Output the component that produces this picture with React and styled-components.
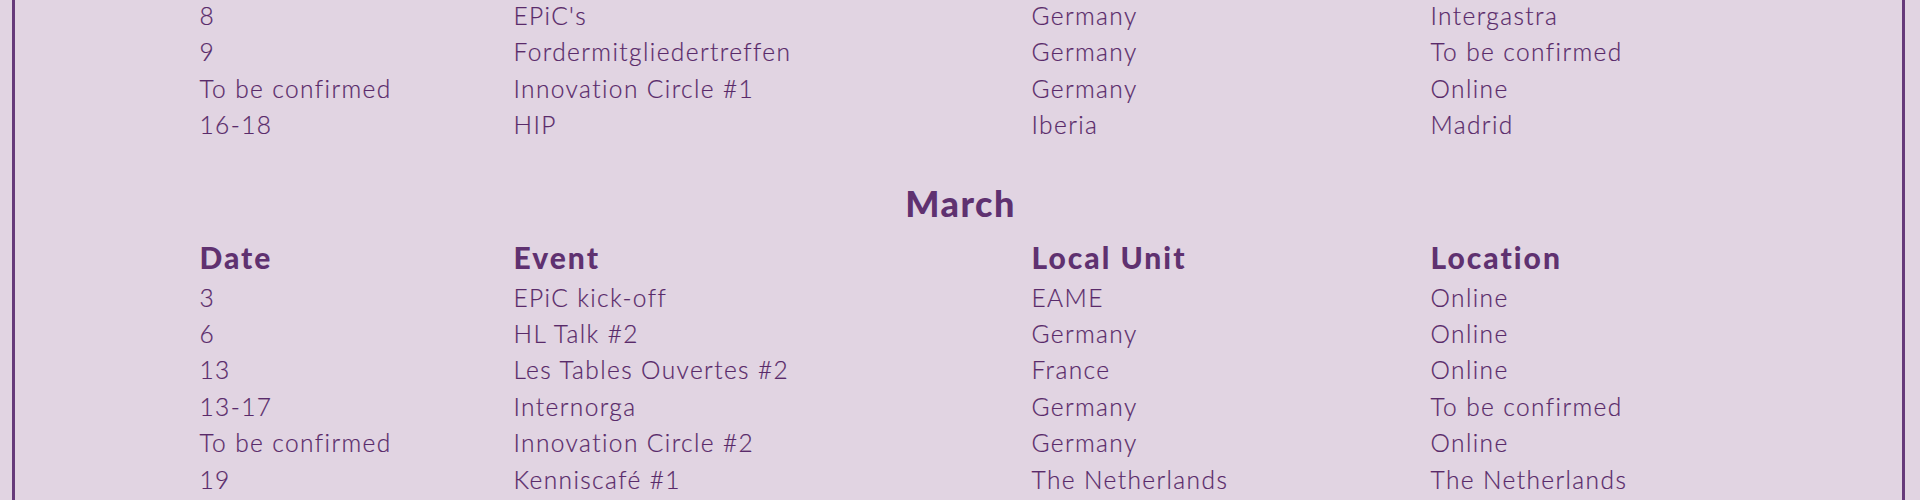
import React from "react";
import styled, { createGlobalStyle } from "styled-components";

const Global = createGlobalStyle`
  html, body {
    margin: 0;
    padding: 0;
    background: #e1d4e2;
    overflow: hidden;
  }
  body {
    font-family: Lato, "Noto Sans", sans-serif;
    color: #5f3170;
  }
`;

const Frame = styled.div`
  margin: -2px 15px 0 12px;
  border-left: 3px solid #663a7a;
  border-right: 3px solid #663a7a;
  min-height: 520px;
`;

const Schedule = styled.div`
  width: 1518px;
  margin: 0 auto;
`;

const Section = styled.section`
  display: flex;
  flex-direction: column;
`;

const MonthTitle = styled.h2`
  margin: 39px 0 0 0;
  font-size: 36px;
  line-height: 40px;
  font-weight: 900;
  letter-spacing: 1.5px;
  text-align: center;
  padding-left: 4px;
`;

const Grid = styled.div`
  display: grid;
  grid-template-columns: 314px 518px 399px 287px;
  margin-top: ${(p) => p.$top || 0}px;
`;

const HeadCell = styled.div`
  font-size: 30px;
  line-height: 40px;
  font-weight: 900;
  letter-spacing: 2px;
  white-space: nowrap;
  margin-top: -3px;
  margin-bottom: 3px;
`;

const Cell = styled.div`
  font-size: 24.5px;
  line-height: 36.4px;
  font-weight: 300;
  letter-spacing: 1.4px;
  color: #592a6a;
  white-space: nowrap;
  -webkit-text-stroke: 0.2px #592a6a;
`;

const cols = ["Date", "Event", "Local Unit", "Location"];

const feb = [
  ["8", "EPiC's", "Germany", "Intergastra"],
  ["9", "Fordermitgliedertreffen", "Germany", "To be confirmed"],
  ["To be confirmed", "Innovation Circle #1", "Germany", "Online"],
  ["16-18", "HIP", "Iberia", "Madrid"],
];

const march = [
  ["3", "EPiC kick-off", "EAME", "Online"],
  ["6", "HL Talk #2", "Germany", "Online"],
  ["13", "Les Tables Ouvertes #2", "France", "Online"],
  ["13-17", "Internorga", "Germany", "To be confirmed"],
  ["To be confirmed", "Innovation Circle #2", "Germany", "Online"],
  ["19", "Kenniscafé #1", "The Netherlands", "The Netherlands"],
];

function Rows({ data }) {
  return data.map((row, i) =>
    row.map((c, j) => <Cell key={i + "-" + j}>{c}</Cell>)
  );
}

export default function App() {
  return (
    <>
      <Global />
      <Frame>
        <Schedule>
          <Section>
            <Grid>
              <Rows data={feb} />
            </Grid>
          </Section>
          <Section>
            <MonthTitle>March</MonthTitle>
            <Grid $top={17}>
              {cols.map((c) => (
                <HeadCell key={c}>{c}</HeadCell>
              ))}
              <Rows data={march} />
            </Grid>
          </Section>
        </Schedule>
      </Frame>
    </>
  );
}
